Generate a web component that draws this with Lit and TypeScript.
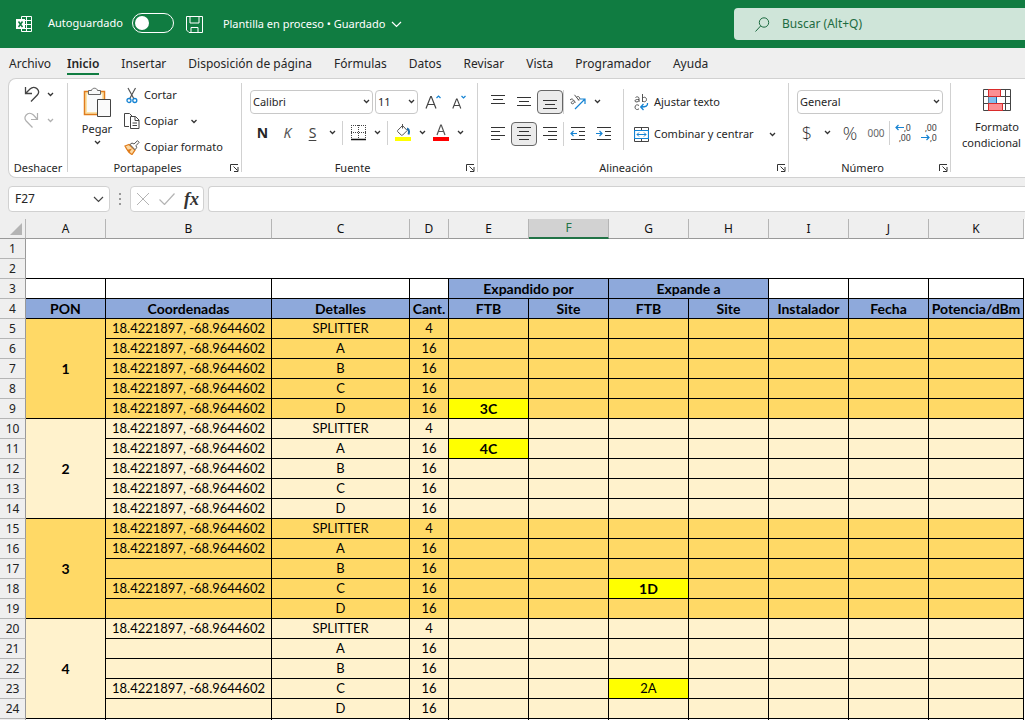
import { LitElement, html, svg, css, nothing } from "lit";
import { customElement, state } from "lit/decorators.js";

type Mark = { text: string; bold: boolean };
type Row = { pon?: string; shade: string; coord: string; detail: string; qty: string; marks?: Record<number, Mark> };

const COORD = "18.4221897, -68.9644602";
const COLUMNS = ["A", "B", "C", "D", "E", "F", "G", "H", "I", "J", "K"];
const COLUMN_WIDTHS = [26, 80, 166, 138, 39, 80, 80, 80, 80, 80, 80, 95];
const HEADERS = ["PON", "Coordenadas", "Detalles", "Cant.", "FTB", "Site", "FTB", "Site", "Instalador", "Fecha", "Potencia/dBm"];
const TABS = ["Archivo", "Inicio", "Insertar", "Disposición de página", "Fórmulas", "Datos", "Revisar", "Vista", "Programador", "Ayuda"];
const DETAILS = ["SPLITTER", "A", "B", "C", "D"];
const EMPTY_COORDS = new Set([17, 19, 21, 22, 24]);
const MARKS: Record<number, Record<number, Mark>> = {
  9: { 4: { text: "3C", bold: true } },
  11: { 4: { text: "4C", bold: true } },
  18: { 6: { text: "1D", bold: true } },
  23: { 6: { text: "2A", bold: false } },
};

const ROWS: Row[] = [];
for (let n = 5; n <= 24; n++) {
  const group = Math.floor((n - 5) / 5);
  const index = (n - 5) % 5;
  ROWS.push({
    pon: index === 0 ? String(group + 1) : undefined,
    shade: group % 2 === 0 ? "gold" : "cream",
    coord: EMPTY_COORDS.has(n) ? "" : COORD,
    detail: DETAILS[index],
    qty: index === 0 ? "4" : "16",
    marks: MARKS[n],
  });
}

const icon = (w: number, h: number, body: unknown) =>
  html`<svg width=${w} height=${h} viewBox="0 0 ${w} ${h}" fill="none" stroke="#444" stroke-width="1" aria-hidden="true">${body}</svg>`;

const chevron = (color = "#333") =>
  icon(7, 5, svg`<path d="M1 1l2.5 2.5L6 1" stroke=${color} stroke-width="1.3"/>`);

const lines = (rows: [number, number, number][]) =>
  icon(14, 14, svg`${rows.map(([x, y, w]) => svg`<path d="M${x} ${y + 0.5}h${w}" stroke="#333"/>`)}`);

const ICONS = {
  excel: icon(16, 16, svg`<g stroke="#fff"><path d="M5.5 3V.5h10v15h-10V13M5.5 4.500h10M9 8.500h6.500M5.500 12.500h10M10.500 .5v15"/><rect x="0" y="3" width="9" height="10" fill="#fff" stroke="none"/><path d="M2.500 5.500l4 5.500M6.500 5.500l-4 5.500" stroke="#107c41" stroke-width="1.500"/></g>`),
  save: icon(17, 17, svg`<path d="M.5.5h16v16H3l-2.500-2.500zM4 .5v6.500h9V.5M5 16.500v-5h7v5" stroke="#fff"/>`),
  search: icon(15, 15, svg`<circle cx="9" cy="5.500" r="4.700" stroke="#1d6b41"/><path d="M5.600 9L.5 14.500" stroke="#1d6b41"/>`),
  undo: icon(16, 16, svg`<path d="M1.500 1v6.500H8M1.500 7.500L6 3c2.500-2.500 5.500-2 7.300 0 1.600 1.800 1.500 4.400 0 6L7 15.500" stroke="#444" stroke-width="1.300"/>`),
  redo: icon(16, 16, svg`<path d="M13.500 1v6.500H7M13.500 7.500L9.500 3C7 .8 4 1 2.200 3 .7 4.800.8 7.400 2.200 9L8.500 15.500" stroke="#b0b0b0" stroke-width="1.200"/>`),
  paste: icon(28, 31, svg`<path d="M1.500 4.500h20v23h-20z" fill="#fbe2a8" stroke="#e07c1c" stroke-width="1.500"/><path d="M4 7h15v18H4z" fill="#fafafa" stroke="none"/><path d="M5.500 7.500v-4h3c.5-3 5.500-3 6 0h3v4z" fill="#f8f8f8" stroke="#666"/><path d="M14.500 12.500h13v17h-13z" fill="#fafafa" stroke="#444"/>`),
  cut: icon(12, 17, svg`<path d="M2 1l6 11M9.500 1l-6 11" stroke="#555" stroke-width="1.200"/><circle cx="3" cy="13.500" r="2" stroke="#1583d3" stroke-width="1.300"/><circle cx="8.800" cy="13.500" r="2" stroke="#1583d3" stroke-width="1.300"/>`),
  copy: icon(16, 16, svg`<path d="M5 13.500H.5V.5h5l2.500 2.500" stroke="#444"/><path d="M6.500 3.500h5l3.500 3.500v8.500H6.500z" fill="#fff" stroke="#444"/><path d="M11 3.500v4h4M8.500 10h4.500M8.500 12.500h4.500" stroke="#444"/>`),
  brush: icon(16, 15, svg`<path d="M1 6l4-1.500 6 5.500-3 4.500C5 13 3 10 1 6z" fill="#fbd9a4" stroke="#e07c1c" stroke-width="1.300"/><path d="M3 10l5-1.500L5 13z" fill="#e07c1c" stroke="none"/><path d="M6 4.500l2-1.500 2 1L13.500.7l1.600 1.600L12 5.700l.7 2-1.700 2z" fill="#fff" stroke="#555"/>`),
  growFont: icon(16, 16, svg`<path d="M1 14.500L5.700 2.500h.6L11 14.500M2.700 10.500h6.600" stroke="#444" stroke-width="1.200"/><path d="M11.500 4L13.500 2l2 2" stroke="#1583d3" stroke-width="1.200"/>`),
  shrinkFont: icon(14, 16, svg`<path d="M.8 14.500L4.500 5h.6l3.700 9.500M2.200 11.500h5.200" stroke="#444" stroke-width="1.100"/><path d="M9.500 2L11.500 4l2-2" stroke="#1583d3" stroke-width="1.200"/>`),
  borders: icon(15, 16, svg`<path d="M0 .5h15M0 7.500h15M.5 0v14M7.500 0v14M14.500 0v14" stroke="#444" stroke-dasharray="1 1"/><path d="M0 14.500h15" stroke="#111" stroke-width="1.500"/>`),
  fill: icon(16, 17, svg`<path d="M7.500 1.500L2.800 6.300c-.5.500-.5 1 0 1.500l3.400 3.200c.5.500 1 .5 1.500 0l4.500-4.500-4.700-5M7.500 0v4.500" stroke="#555"/><path d="M12 4.500c2 .8 2.300 3.500 1.500 6" stroke="#1a6cae" stroke-width="2"/><path d="M0 13h16v4H0z" fill="#ff0" stroke="none"/>`),
  fontColor: icon(16, 17, svg`<path d="M4 11L7.700 1h.6L12 11M5.300 7.500h5.400" stroke="#555" stroke-width="1.200"/><path d="M0 13h16v4H0z" fill="#f00" stroke="none"/>`),
  orient: icon(17, 16, svg`<path d="M6 15L15.500 5.500M11 5h5v5" stroke="#1583d3" stroke-width="1.200"/><path d="M1 6c1.500-1.500 2.500-1.200 3.500 0l2 2.500M4.700 6.800c-1.500.2-3 1.500-2.200 2.600.8 1 2.500 0 3-1.200M5.500.8l4.500 5.700M7.500 3.200c1-1 2.500-.7 3 .3.600 1.200-.3 2.500-1.700 2.300" stroke="#555"/>`),
  indentLess: icon(15, 14, svg`<path d="M1 .5h14M9 4.500h6M9 8.500h6M1 12.500h14" stroke="#333"/><path d="M7 6.500H1M3.500 4L1 6.500 3.500 9" stroke="#1583d3" stroke-width="1.200"/>`),
  indentMore: icon(15, 14, svg`<path d="M1 .5h14M9 4.500h6M9 8.500h6M1 12.500h14" stroke="#333"/><path d="M0 6.500h6M3.500 4L6 6.500 3.500 9" stroke="#1583d3" stroke-width="1.200"/>`),
  wrap: icon(15, 17, svg`<g stroke="#555"><path d="M1.500 3.500c1-1 3.500-1 3.500 1V8M5 5.500c-2 0-4 0-4 1.300C1 8.500 4 8.300 5 6.500M8.500 0v8M8.500 4.500c1-2 4-1.500 4 1s-3 3-4 1M5 11.500c-1.500-1.300-4-.7-4 1.700s2.500 3 4 1.600"/></g><path d="M13.500 9c.5 3-1.500 4-6.500 4M9.500 10L6.700 13l2.800 3" stroke="#1583d3" stroke-width="1.300"/>`),
  merge: icon(15, 15, svg`<path d="M.5.500h14v14H.5zM7.500 0v3M7.500 12v3" stroke="#444"/><path d="M.5 3.500h14v8H.5z" fill="#fff" stroke="#1583d3" stroke-width="1.200"/><path d="M3 7.500h9M5 5.500l-2 2 2 2M10 5.500l2 2-2 2" stroke="#1583d3"/>`),
  conditional: icon(28, 22, svg`<path d="M.5.500h27v21H.5zM0 7.500h28M0 14.500h28M5.500 0v22M22.500 0v22" stroke="#444"/><path d="M5.500.500h12v7h-12zM5.500 14.500h14v7h-14z" fill="#fc8f93" stroke="#d92b2b"/><path d="M5.500 8h8v6h-8z" fill="#83bdec" stroke="none"/><path d="M13.500 8v6" stroke="#1565a8"/>`),
  launcher: icon(9, 8, svg`<path d="M.5 7V.5H8M3.500 2.500L7.500 6.500M8 3v4.500H4" stroke="#333"/>`),
  cancel: icon(14, 12, svg`<path d="M1 0l12 12M13 0L1 12" stroke="#b4b4b4"/>`),
  accept: icon(16, 12, svg`<path d="M.5 6.500L5.500 11.500 15.500.5" stroke="#b4b4b4" stroke-width="1.200"/>`),
  arrowLeft: icon(9, 7, svg`<path d="M9 3.500H1M3.500 1L1 3.500 3.500 6" stroke="#1583d3" stroke-width="1.200"/>`),
  arrowRight: icon(9, 7, svg`<path d="M0 3.500h8M5.500 1L8 3.500 5.500 6" stroke="#1583d3" stroke-width="1.200"/>`),
};

@customElement("app-root")
export class AppRoot extends LitElement {
  @state() private activeTab = "Inicio";
  @state() private autosave = false;

  static styles = css`
    :host { display: flex; flex-direction: column; height: 100vh; overflow: hidden; background: #efefef; color: #262626; font: 12px/16px "Noto Sans", sans-serif; }
    * { box-sizing: border-box; }
    button, input, select { font: inherit; color: inherit; margin: 0; padding: 0; border: 0; background: none; border-radius: 0; outline-offset: -1px; }
    svg { display: block; flex: none; }
    button { display: flex; align-items: center; justify-content: center; white-space: nowrap; }

    .titlebar { display: flex; align-items: center; flex: none; height: 48px; padding-left: 16px; background: #107c41; color: #fff; font-size: 11px; }
    .autosave { display: flex; align-items: center; gap: 9px; margin: 0 12px 2px 16px; }
    .switch { appearance: none; width: 42px; height: 20px; border: 1px solid #fff; border-radius: 10px; display: flex; align-items: center; padding: 0 2px; }
    .switch::before { content: ""; width: 14px; height: 14px; border-radius: 50%; background: #fff; }
    .switch:checked { justify-content: flex-end; }
    .docname { margin-left: 20px; gap: 6px; }
    .search { display: flex; align-items: center; gap: 12px; flex: 0 0 320px; height: 32px; margin-left: auto; margin-right: -29px; padding-left: 21px; border-radius: 4px; background: #cfe5d9; font-size: 12px; }
    .search-input { flex: 1; color: #1d6b41; }
    .search-input::placeholder { color: #1d6b41; opacity: 1; }

    .tabs { display: flex; flex: none; height: 30px; padding: 4px 0 0 9px; gap: 22px; }
    .tab { height: 23px; padding-top: 2px; border-bottom: 2px solid transparent; }
    .tab:first-child { margin-right: -6px; }
    .tab.active { font-weight: 600; border-color: #107c41; }

    .ribbon { display: flex; flex: none; height: 100px; margin-left: 8px; border: 1px solid #d1d1d1; border-right: 0; border-radius: 8px 0 0 8px; background: #fff; overflow: hidden; font-size: 11px; }
    .group { display: flex; flex-direction: column; flex: none; padding: 4px 1px 2px 0; background: linear-gradient(#d1d1d1, #d1d1d1) right 4px / 1px 89px no-repeat; }
    .group.last { background: none; }
    .tools { display: flex; flex: 1; }
    .caption { display: flex; align-items: center; height: 15px; line-height: 15px; }
    .caption-text { flex: 1; text-align: center; }
    .launcher { width: 14px; height: 15px; }
    .g-undo { width: 59px; }
    .g-clip { width: 174px; }
    .g-font { width: 236px; }
    .g-align { width: 311px; }
    .g-num { width: 162px; }
    .g-style { width: 94px; }

    .undo-tools { flex-direction: column; gap: 8px; padding: 2px 0 0 15px; }
    .pair { display: flex; align-items: center; }
    .pair .ico { width: 16px; height: 18px; }
    .drop { width: 20px; height: 18px; }
    .paste { flex-direction: column; justify-content: flex-start; width: 30px; margin: 4px 12px 0 14px; gap: 3px; }
    .clip-list { display: flex; flex-direction: column; gap: 4px; padding-top: 1px; }
    .clip-btn { gap: 4px; height: 22px; justify-content: flex-start; }
    .clip-btn svg { width: 16px; }
    .clip-btn .more { margin-left: 4px; }

    .font-tools, .num-tools { flex-direction: column; gap: 6px; padding: 6px 0 0 8px; }
    .line { display: flex; align-items: center; height: 25px; }
    .box { display: flex; align-items: center; height: 24px; border: 1px solid #c8c8c8; border-radius: 4px; background: #fff; }
    .box svg { margin-right: 2px; }
    .select { appearance: none; flex: 1; min-width: 0; height: 22px; padding-left: 2px; }
    .w-font { width: 123px; margin-right: 2px; }
    .w-size { width: 43px; margin-right: 2px; }
    .w-num { width: 146px; }
    .b26 { width: 26px; height: 24px; }
    .b24 { width: 24px; height: 24px; }
    .b20 { width: 20px; height: 24px; }
    .b14 { width: 14px; height: 24px; }
    .pressed { border: 1px solid #666; border-radius: 4px; background: #ebebeb; }
    .sep { width: 1px; height: 24px; background: #d1d1d1; }
    .font-tools .sep { margin: 0 3px; }
    .style-set { display: grid; grid-template-columns: repeat(3, 25px); height: 24px; font-size: 14px; }
    .bold { font-weight: 700; }
    .italic { font-style: italic; color: #555; }
    .under { text-decoration: underline; text-underline-offset: 2px; color: #444; }

    .align-grid { display: flex; flex-direction: column; gap: 7px; margin: 6px 0 10px; padding: 0 0 0 7px; width: 146px; border-right: 1px solid #d1d1d1; }
    .align-side { display: flex; flex-direction: column; gap: 8px; padding: 7px 0 0 10px; }
    .side-btn { justify-content: flex-start; gap: 5px; height: 24px; }
    .side-btn .more { margin-left: 10px; }

    .sym { font: 300 18px/24px "Open Sans", sans-serif; color: #333; }
    .zeros { font-size: 10px; color: #666; }
    .dec { display: grid; grid-template-columns: auto auto; align-items: center; justify-content: center; align-content: center; width: 26px; height: 24px; font: 9px/10px Roboto, sans-serif; color: #444; }
    .span { grid-column: 1 / 3; text-align: right; }
    .cond { flex-direction: column; justify-content: flex-start; margin: 6px 0 0 6px; gap: 8px; width: 80px; }
    .cond-label { display: flex; flex-direction: column; align-items: center; }
    .cond-line { display: flex; align-items: center; gap: 4px; }

    .formula { display: flex; flex: none; gap: 4px; height: 26px; margin: 8px 0 7px 8px; }
    .field { display: flex; align-items: center; border: 1px solid #d1d1d1; border-radius: 4px; background: #fff; }
    .name { width: 102px; padding: 0 5px 0 6px; }
    .name-input { flex: 1; min-width: 0; }
    .dots { display: flex; align-items: center; width: 12px; justify-content: center; }
    .fx-box { width: 74px; padding: 0 4px 0 5px; gap: 9px; }
    .fx { font: italic 700 18px/20px "Liberation Serif", serif; color: #333; }
    .expr { flex: 1; border-right: 0; border-radius: 4px 0 0 4px; }
    .expr-input { flex: 1; padding: 0 6px; }

    .sheet { flex: 1; min-height: 0; overflow: hidden; background: #fff; }
    .grid { table-layout: fixed; width: 1024px; border-collapse: separate; border-spacing: 0; }
    .grid th, .grid td { height: 20px; padding: 0; text-align: center; white-space: nowrap; overflow: hidden; line-height: 19px; }
    .grid td { border-right: 1px solid #000; border-bottom: 1px solid #000; color: #000; font-family: Lato, sans-serif; font-size: 13px; }
    .grid td.blank { border: 0; background: #fff; }
    .grid td.blank.ruled { border-bottom: 1px solid #000; }
    .grid .col { background: #efefef; border-right: 1px solid #b5b5b5; border-bottom: 1px solid #999; font-weight: 400; color: #111; }
    .grid .col.selected { background: #d2d2d2; color: #217346; border-bottom: 2px solid #217346; line-height: 18px; }
    .grid .row { background: #efefef; border-right: 1px solid #999; border-bottom: 1px solid #b5b5b5; font-weight: 400; color: #222; }
    .corner svg { margin: 0 0 0 10px; }
    .grid td.head { background: #8ea9db; font-weight: 700; font-size: 14px; }
    .gold { background: #ffd966; }
    .cream { background: #fff2cc; }
    .grid td.mark { background: #ff0; }
    .grid td.strong { font-weight: 700; font-size: 14px; }
  `;

  private group(name: string, cls: string, tools: unknown, launch = false) {
    return html`<section class="group ${cls}" aria-label=${name}>
      ${tools}
      <div class="caption">
        <span class="caption-text">${name}</span>
        ${launch ? html`<button class="launcher" aria-label="Opciones de ${name}">${ICONS.launcher}</button>` : nothing}
      </div>
    </section>`;
  }

  private tool(label: string, body: unknown, cls = "b26") {
    return html`<button class=${cls} aria-label=${label}>${body}</button>`;
  }

  private renderRibbon() {
    const t = this.tool;
    return html`<div class="ribbon">
      ${this.group("Deshacer", "g-undo", html`<div class="tools undo-tools">
        <div class="pair">${t("Deshacer", ICONS.undo, "ico")}${t("Opciones de deshacer", chevron(), "drop")}</div>
        <div class="pair">${t("Rehacer", ICONS.redo, "ico")}${t("Opciones de rehacer", chevron("#b0b0b0"), "drop")}</div>
      </div>`)}
      ${this.group("Portapapeles", "g-clip", html`<div class="tools">
        <button class="paste">${ICONS.paste}<span>Pegar</span>${chevron()}</button>
        <div class="clip-list">
          <button class="clip-btn">${ICONS.cut}Cortar</button>
          <button class="clip-btn">${ICONS.copy}Copiar<span class="more">${chevron()}</span></button>
          <button class="clip-btn">${ICONS.brush}Copiar formato</button>
        </div>
      </div>`, true)}
      ${this.group("Fuente", "g-font", html`<div class="tools font-tools">
        <div class="line">
          <div class="box w-font"><select class="select" aria-label="Fuente"><option>Calibri</option></select>${chevron()}</div>
          <div class="box w-size"><select class="select" aria-label="Tamaño de fuente"><option>11</option></select>${chevron()}</div>
          ${t("Aumentar tamaño", ICONS.growFont)}${t("Disminuir tamaño", ICONS.shrinkFont)}
        </div>
        <div class="line">
          <div class="style-set">${t("Negrita", "N", "bold")}${t("Cursiva", "K", "italic")}${t("Subrayado", "S", "under")}</div>
          ${t("Opciones de subrayado", chevron(), "b14")}
          <span class="sep"></span>
          ${t("Bordes", ICONS.borders, "b24")}${t("Opciones de bordes", chevron(), "b14")}
          <span class="sep"></span>
          ${t("Color de relleno", ICONS.fill, "b24")}${t("Opciones de relleno", chevron(), "b14")}${t("Color de fuente", ICONS.fontColor, "b24")}${t("Opciones de color", chevron(), "b14")}
        </div>
      </div>`, true)}
      ${this.group("Alineación", "g-align", html`<div class="tools">
        <div class="align-grid">
          <div class="line">
            ${t("Alinear arriba", lines([[0, 0, 14], [2, 4, 10], [0, 8, 14]]))}
            ${t("Alinear al medio", lines([[0, 2, 14], [2, 6, 10], [0, 10, 14]]))}
            ${t("Alinear abajo", lines([[0, 5, 14], [2, 9, 10], [0, 13, 14]]), "b26 pressed")}
            <span class="sep"></span>
            ${t("Orientación", ICONS.orient)}${t("Opciones de orientación", chevron(), "b14")}
          </div>
          <div class="line">
            ${t("Alinear a la izquierda", lines([[0, 0, 14], [0, 4, 9], [0, 8, 14], [0, 12, 9]]))}
            ${t("Centrar", lines([[0, 0, 14], [2, 4, 10], [0, 8, 14], [2, 12, 10]]), "b26 pressed")}
            ${t("Alinear a la derecha", lines([[0, 0, 14], [5, 4, 9], [0, 8, 14], [5, 12, 9]]))}
            <span class="sep"></span>
            ${t("Disminuir sangría", ICONS.indentLess)}${t("Aumentar sangría", ICONS.indentMore)}
          </div>
        </div>
        <div class="align-side">
          <button class="side-btn">${ICONS.wrap}Ajustar texto</button>
          <button class="side-btn">${ICONS.merge}Combinar y centrar<span class="more">${chevron()}</span></button>
        </div>
      </div>`, true)}
      ${this.group("Número", "g-num", html`<div class="tools num-tools">
        <div class="line"><div class="box w-num"><select class="select" aria-label="Formato de número"><option>General</option></select>${chevron()}</div></div>
        <div class="line">
          ${t("Moneda", "$", "b20 sym")}${t("Opciones de moneda", chevron(), "b20")}${t("Porcentaje", "%", "b26 sym")}${t("Millares", "000", "b26 zeros")}
          <span class="sep"></span>
          <button class="dec" aria-label="Aumentar decimales">${ICONS.arrowLeft}<span>,0</span><span class="span">,00</span></button>
          <button class="dec" aria-label="Disminuir decimales"><span class="span">,00</span>${ICONS.arrowRight}<span>,0</span></button>
        </div>
      </div>`, true)}
      <section class="group g-style last" aria-label="Estilos">
        <button class="cond">${ICONS.conditional}<span class="cond-label"><span>Formato</span><span class="cond-line">condicional${chevron()}</span></span></button>
      </section>
    </div>`;
  }

  private renderSheet() {
    return html`<div class="sheet"><table class="grid">
      <colgroup>${COLUMN_WIDTHS.map((w) => html`<col style="width:${w}px">`)}</colgroup>
      <thead><tr>
        <th class="col corner" aria-label="Seleccionar todo">${icon(12, 12, svg`<path d="M12 0v12H0z" fill="#b4b4b4" stroke="none"/>`)}</th>
        ${COLUMNS.map((c) => html`<th scope="col" class="col ${c === "F" ? "selected" : ""}">${c}</th>`)}
      </tr></thead>
      <tbody>
        <tr><th scope="row" class="row">1</th><td class="blank" colspan="11"></td></tr>
        <tr><th scope="row" class="row">2</th><td class="blank ruled" colspan="11"></td></tr>
        <tr><th scope="row" class="row">3</th><td></td><td></td><td></td><td></td>
          <td class="head" colspan="2">Expandido por</td><td class="head" colspan="2">Expande a</td><td></td><td></td><td></td></tr>
        <tr><th scope="row" class="row">4</th>${HEADERS.map((h) => html`<td class="head">${h}</td>`)}</tr>
        ${ROWS.map((r, i) => html`<tr class=${r.shade}>
          <th scope="row" class="row">${i + 5}</th>
          ${r.pon ? html`<td class="strong ${r.shade}" rowspan="5">${r.pon}</td>` : nothing}
          <td>${r.coord}</td><td>${r.detail}</td><td>${r.qty}</td>
          ${[4, 5, 6, 7, 8, 9, 10].map((c) => {
            const m = r.marks?.[c];
            return m ? html`<td class="mark ${m.bold ? "strong" : ""}">${m.text}</td>` : html`<td></td>`;
          })}
        </tr>`)}
        <tr><th scope="row" class="row"></th>${COLUMNS.map(() => html`<td></td>`)}</tr>
      </tbody>
    </table></div>`;
  }

  render() {
    return html`
      <header class="titlebar">
        ${ICONS.excel}
        <label class="autosave">Autoguardado
          <input class="switch" type="checkbox" role="switch" .checked=${this.autosave} @change=${() => (this.autosave = !this.autosave)}>
        </label>
        <button aria-label="Guardar">${ICONS.save}</button>
        <button class="docname">Plantilla en proceso • Guardado ${icon(11, 7, svg`<path d="M1 1l4.500 4.500L10 1" stroke="#fff" stroke-width="1.200"/>`)}</button>
        <label class="search">${ICONS.search}<input class="search-input" type="search" aria-label="Buscar" placeholder="Buscar (Alt+Q)"></label>
      </header>
      <nav class="tabs">${TABS.map((t) => html`<button class="tab ${t === this.activeTab ? "active" : ""}" @click=${() => (this.activeTab = t)}>${t}</button>`)}</nav>
      ${this.renderRibbon()}
      <div class="formula">
        <div class="field name"><input class="name-input" aria-label="Cuadro de nombres" value="F27">${icon(11, 7, svg`<path d="M1 1l4.500 4.500L10 1" stroke="#444" stroke-width="1.200"/>`)}</div>
        <span class="dots">${icon(2, 12, svg`<path d="M0 0h2v2H0zM0 5h2v2H0zM0 10h2v2H0z" fill="#999" stroke="none"/>`)}</span>
        <div class="field fx-box">
          <button aria-label="Cancelar">${ICONS.cancel}</button><button aria-label="Introducir">${ICONS.accept}</button><button class="fx" aria-label="Insertar función">fx</button>
        </div>
        <div class="field expr"><input class="expr-input" aria-label="Barra de fórmulas"></div>
      </div>
      ${this.renderSheet()}
    `;
  }
}
